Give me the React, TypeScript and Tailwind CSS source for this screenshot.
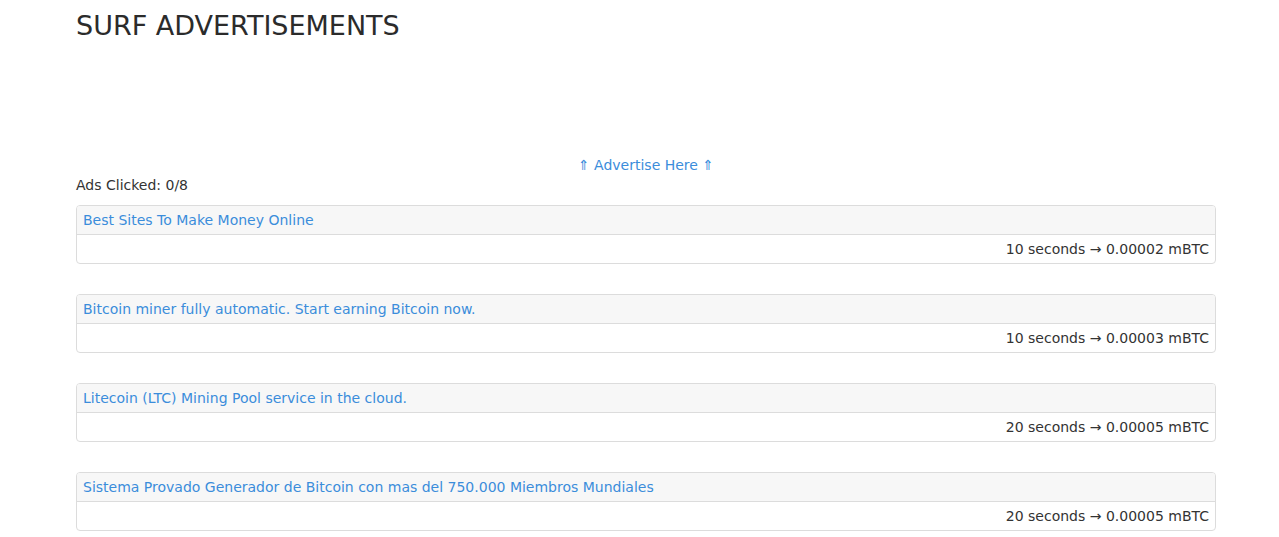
const ads = [
  { title: "Best Sites To Make Money Online", seconds: 10, reward: "0.00002" },
  { title: "Bitcoin miner fully automatic. Start earning Bitcoin now.", seconds: 10, reward: "0.00003" },
  { title: "Litecoin (LTC) Mining Pool service in the cloud.", seconds: 20, reward: "0.00005" },
  { title: "Sistema Provado Generador de Bitcoin con mas del 750.000 Miembros Mundiales", seconds: 20, reward: "0.00005" },
]

export default function App() {
  return (
    <div className="min-h-[537px] bg-white font-['DejaVu_Sans',sans-serif] text-[#333]">
      <div className="ml-[76px] w-[1140px]">
        <h1 className="pt-[9px] text-[27px] font-normal leading-[34px] text-[#2b2b2b]">SURF ADVERTISEMENTS</h1>

        {/* Banner slot */}
        <div className="h-[112px]" />
        <div className="text-center text-[14px] leading-[20px]">
          <a href="#" className="text-[#3b8ddb]">⇑ Advertise Here ⇑</a>
        </div>

        <p className="text-[14px] leading-[20px] text-[#333]">Ads Clicked: 0/8</p>

        <div className="mt-[10px] flex flex-col gap-[30px]">
          {ads.map((ad, i) => (
            <div key={i} className="overflow-hidden rounded-[4px] border border-[#dcdcdc]">
              <div className="border-b border-[#dcdcdc] bg-[#f7f7f7] px-[6px] py-[4px] text-[14px] leading-[20px]">
                <a href="#" className="text-[#3b8ddb]">{ad.title}</a>
              </div>
              <div className="px-[6px] py-[4px] text-right text-[14px] leading-[20px] text-[#333]">
                {ad.seconds} seconds → {ad.reward} mBTC
              </div>
            </div>
          ))}
        </div>
      </div>
    </div>
  )
}
